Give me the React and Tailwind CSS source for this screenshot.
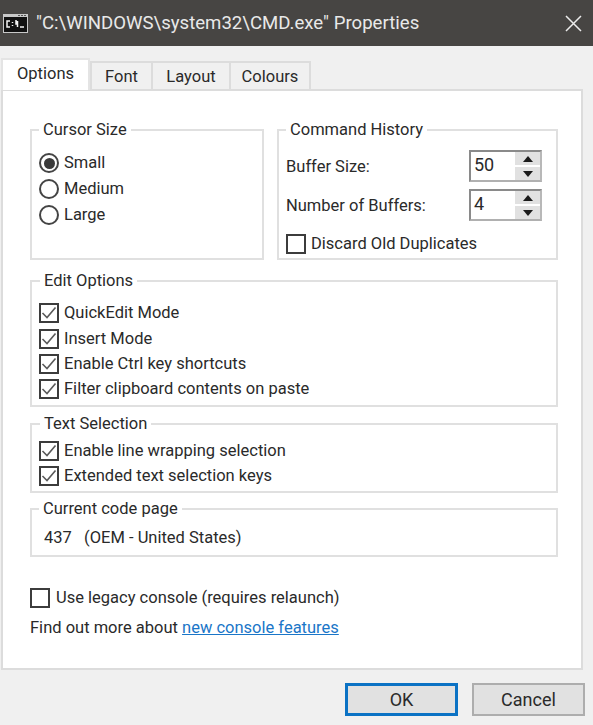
import React from "react";

function Group({ title, className = "", left = "left-[8px]", children }) {
  return (
    <div className={`relative border-2 border-[#e0e0e0] ${className}`}>
      <span className={`absolute -top-[12px] ${left} bg-white px-[4px] text-[16.5px] leading-[22px] whitespace-nowrap`}>{title}</span>
      {children}
    </div>
  );
}

function Check({ checked }) {
  return (
    <span className="w-[20px] h-[20px] border-2 border-[#3c3c3c] bg-white shrink-0 flex items-center justify-center">
      {checked && (
        <svg width="16" height="16" viewBox="0 0 16 16" fill="none">
          <path d="M1.5 8 L6 12.5 L14.5 2.5" stroke="#5a5a5a" strokeWidth="1.6" />
        </svg>
      )}
    </span>
  );
}

function CheckRow({ label, h = "h-[25px]", pad = "pt-[2px]" }) {
  return (
    <div className={`flex items-center gap-[5px] ${h}`}>
      <Check checked />
      <span className={`text-[16.5px] whitespace-nowrap ${pad}`}>{label}</span>
    </div>
  );
}

function Radio({ label, checked }) {
  return (
    <div className="flex items-center gap-[5px] h-[26px]">
      <span className="w-[20px] h-[20px] rounded-full border-2 border-[#444444] bg-white shrink-0 flex items-center justify-center">
        {checked && <span className="w-[11px] h-[11px] rounded-full bg-[#3a3a3a]" />}
      </span>
      <span className="text-[16.5px]">{label}</span>
    </div>
  );
}

function Spinner({ value }) {
  return (
    <div className="flex w-[73px] h-[32px] border-2 border-[#8a8a8a] border-r-[#b8b8b8] border-b-[#b0b0b0] bg-white shrink-0">
      <span className="flex-1 pl-[3px] text-[18px] leading-[26px]">{value}</span>
      <div className="w-[25px] flex flex-col gap-[2px] bg-white">
        {[0, 1].map((i) => (
          <div key={i} className="flex-1 bg-[#e1e1e1] flex items-center justify-center">
            <svg width="10" height="6" viewBox="0 0 10 6">
              <path d={i === 0 ? "M5 0 L10 6 L0 6 Z" : "M0 0 L10 0 L5 6 Z"} fill="#1a1a1a" />
            </svg>
          </div>
        ))}
      </div>
    </div>
  );
}

function Tab({ label, className }) {
  return (
    <div className={`h-[29px] mt-[2px] border-2 border-b-0 border-[#dcdcdc] flex items-center justify-center text-[16.5px] pt-[1px] ${className}`}>
      {label}
    </div>
  );
}

export default function App() {
  return (
    <div className="w-[593px] h-[725px] bg-[#f0f0f0] flex flex-col overflow-hidden text-[#2a2a2a] font-['Roboto',sans-serif]">
      <div className="h-[46px] bg-[#474543] flex items-center shrink-0">
        <svg className="ml-[3px]" width="25" height="19" viewBox="0 0 25 19">
          <rect width="25" height="19" fill="#c8c8c8" />
          <rect x="1" y="3" width="23" height="15" fill="#111111" />
          <rect x="15" y="1" width="2" height="1" fill="#555" />
          <rect x="18" y="1" width="2" height="1" fill="#555" />
          <rect x="21" y="1" width="2" height="1" fill="#555" />
          <path d="M7 7H4V13H7M9.5 8V9M9.5 11V12M13 6V10H15M14.5 7V13M17 13H21" stroke="#f4f4f4" strokeWidth="1.5" fill="none" />
        </svg>
        <span className="ml-[8px] pt-[2px] text-[18.6px] text-[#e9e9e9] whitespace-nowrap">"C:\WINDOWS\system32\CMD.exe" Properties</span>
        <svg className="ml-auto mr-[11px]" width="17" height="17" viewBox="0 0 17 17">
          <path d="M1 1 L16 16 M16 1 L1 16" stroke="#ececec" strokeWidth="1.5" />
        </svg>
      </div>

      <div className="flex h-[44px] items-end pl-[1px] shrink-0 relative z-10">
        <div className="h-[32px] w-[89px] bg-white border-2 border-b-0 border-[#e4e4e4] flex items-start justify-center pt-[2px] text-[16.5px] relative z-10">Options</div>
        <Tab label="Font" className="w-[63px]" />
        <Tab label="Layout" className="w-[80px] -ml-[2px]" />
        <Tab label="Colours" className="w-[82px] -ml-[2px]" />
      </div>

      <div className="ml-[1px] w-[582px] h-[581px] -mt-[1px] bg-white border-2 border-[#dcdcdc] pl-[27px] pr-[23px] pt-[38px] shrink-0">
        <div className="flex gap-[13px]">
          <Group title="Cursor Size" className="w-[234px] h-[131px] pt-[19px] pl-[7px]" left="left-[7px]">
            <Radio label="Small" checked />
            <Radio label="Medium" />
            <Radio label="Large" />
          </Group>
          <Group title="Command History" left="left-[7px]" className="w-[281px] h-[131px] pl-[7px] pr-[14px] pt-[19px]">
            <div className="flex items-center justify-between h-[32px]">
              <span className="text-[16.5px] pt-[3px]">Buffer Size:</span>
              <Spinner value="50" />
            </div>
            <div className="flex items-center justify-between h-[32px] mt-[7px]">
              <span className="text-[16.5px] pt-[2px]">Number of Buffers:</span>
              <Spinner value="4" />
            </div>
            <div className="flex items-center gap-[5px] mt-[11px] h-[24px]">
              <Check />
              <span className="text-[16.5px] whitespace-nowrap">Discard Old Duplicates</span>
            </div>
          </Group>
        </div>

        <Group title="Edit Options" className="w-[528px] h-[127px] mt-[20px] pt-[18px] pl-[7px]">
          <CheckRow label="QuickEdit Mode" h="h-[26px]" pad="" />
          <CheckRow label="Insert Mode" />
          <CheckRow label="Enable Ctrl key shortcuts" />
          <CheckRow label="Filter clipboard contents on paste" />
        </Group>

        <Group title="Text Selection" className="w-[528px] h-[70px] mt-[16px] pt-[13px] pl-[7px]">
          <CheckRow label="Enable line wrapping selection" />
          <CheckRow label="Extended text selection keys" />
        </Group>

        <Group title="Current code page" left="left-[7px]" className="w-[528px] h-[49px] mt-[15px] pl-[12px] pt-[17px]">
          <span className="text-[16.5px] leading-[22px] block whitespace-pre">437   (OEM - United States)</span>
        </Group>

        <div className="flex items-center gap-[6px] mt-[31px] h-[20px]">
          <Check />
          <span className="text-[16.5px] whitespace-nowrap">Use legacy console (requires relaunch)</span>
        </div>
        <div className="mt-[9px] text-[16.5px] leading-[22px] whitespace-nowrap">
          Find out more about <a className="text-[#1a76c8] underline">new console features</a>
        </div>
      </div>

      <div className="flex justify-end gap-[14px] pr-[8px] pt-[13px]">
        <button className="w-[113px] h-[33px] bg-[#e1e1e1] border-[3px] border-[#0b72c4] text-[18px]">OK</button>
        <button className="w-[113px] h-[33px] bg-[#e1e1e1] border-2 border-[#adadad] text-[18px]">Cancel</button>
      </div>
    </div>
  );
}
